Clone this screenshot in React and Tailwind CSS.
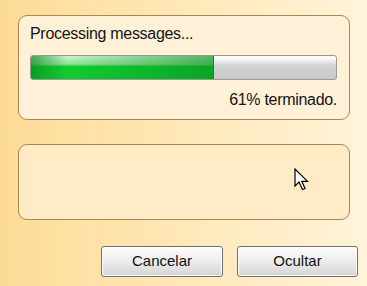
import React from "react";

function Cursor() {
  return (
    <svg width="15" height="24" viewBox="0 0 15 24" className="absolute left-[275px] top-[23px]">
      <path
        d="M1 1 L1 18 L5 14 L8.5 21.5 L11 20.5 L7.8 13.3 L13.5 13.3 Z"
        fill="#ffffff"
        stroke="#000000"
        strokeWidth="1.2"
        strokeLinejoin="miter"
      />
    </svg>
  );
}

function ProgressBar({ value }) {
  return (
    <div className="relative h-[25px] w-[307px] rounded-[3px] border border-[#9a9a9a] bg-linear-to-b from-[#fbfbfb] from-10% via-[#d4d4d4] via-40% to-[#c8c8c8] overflow-hidden">
      <div
        className="h-full bg-linear-to-b from-[#c4f2c4] from-5% via-[#8ee39a] via-35% to-[#10cc30] to-45% border-r border-[#0a8e22]"
        style={{ width: `${value}%` }}
      >
        <div className="h-full w-full bg-linear-to-r from-[#078a1e]/70 via-transparent via-20% to-[#078a1e]/60"></div>
      </div>
    </div>
  );
}

function Button({ children, width }) {
  return (
    <button
      className={`h-[31px] ${width} rounded-[3px] border border-[#6f6f6f] bg-linear-to-b from-[#fcfcfc] via-[#ededed] to-[#d4d4d4] text-[15px] text-[#111111] shadow-[inset_0_0_0_1px_#ffffff]`}
    >
      {children}
    </button>
  );
}

export default function App() {
  return (
    <div
      className="relative w-[367px] h-[286px] overflow-hidden bg-linear-to-r from-[#fddb96] via-[#fee8b8] to-[#fff3da] pt-[15px]"
      style={{ fontFamily: '"Liberation Sans", Arial, sans-serif' }}
    >
      <div className="ml-[18px] h-[105px] w-[332px] rounded-[9px] border-[1.5px] border-[#ad8650] bg-[#fff1d8] pl-[11px] pt-[9px]">
        <div className="text-[16px] leading-[18px] text-[#141414] tracking-[-0.3px]">
          Processing messages...
        </div>
        <div className="mt-[12px]">
          <ProgressBar value={60} />
        </div>
        <div className="mt-[11px] w-[307px] text-right text-[16px] leading-[18px] text-[#141414] tracking-[-0.3px]">
          61% terminado.
        </div>
      </div>

      <div className="relative ml-[18px] mt-[24px] h-[76px] w-[332px] rounded-[9px] border-[1.5px] border-[#ad8650] bg-[#ffebc6]">
        <Cursor />
      </div>

      <div className="mt-[26px] flex justify-end gap-[14px] pr-[9px]">
        <Button width="w-[122px]">Cancelar</Button>
        <Button width="w-[121px]">Ocultar</Button>
      </div>
    </div>
  );
}
